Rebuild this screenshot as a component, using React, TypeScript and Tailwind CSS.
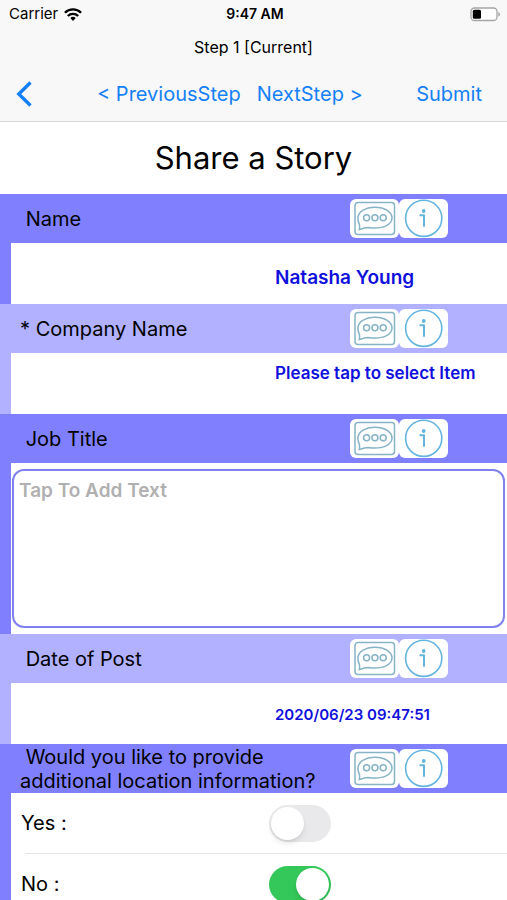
import React, { useState } from 'react'

const CommentIcon = () => (
  <svg viewBox="0 0 49 39" className="w-full h-full" fill="none" stroke="#86b3c6" strokeWidth="1.5">
    <rect x="5" y="3.500" width="39.500" height="32" rx="3" />
    <path d="M9.300 30.600c.4-2 .4-3.600.1-5.200C8.500 23.600 7.900 21.700 7.900 19.500 7.900 13.100 15.200 8.200 25 8.200S42 13.100 42 19.100 34.500 29 25 29c-2.600 0-4.900-.3-7-.6-2.500 0-5.300.9-8.700 2.200z" />
    <circle cx="16.600" cy="18.800" r="3" />
    <circle cx="24.900" cy="18.800" r="3" />
    <circle cx="33.200" cy="18.800" r="3" />
  </svg>
)

const InfoIcon = () => (
  <svg viewBox="0 0 49 39" className="w-full h-full" fill="none" stroke="#64b4e0" strokeWidth="1.600">
    <circle cx="24.700" cy="19.300" r="18.100" />
    <circle cx="24.700" cy="12" r="1.900" fill="#64b4e0" stroke="none" />
    <path d="M21.300 16.300h3.700v10.700" strokeWidth="2" strokeLinecap="round" strokeLinejoin="round" />
  </svg>
)

const WifiIcon = () => (
  <svg viewBox="0 0 18 13" className="w-[18px] h-[13px]" fill="none" stroke="#000" strokeWidth="2.300">
    <path d="M.9 4.800a11.500 11.500 0 0 1 16.200 0" />
    <path d="M3.800 8a7.400 7.400 0 0 1 10.400 0" />
    <path d="M9 13l-2.700-2.900a3.900 3.900 0 0 1 5.400 0z" fill="#000" stroke="none" />
  </svg>
)

const BatteryIcon = () => (
  <svg viewBox="0 0 31 15" className="w-[31px] h-[15px]">
    <rect x="1" y="1" width="26" height="12.500" rx="3.500" fill="#fff" stroke="#a6a6a6" strokeWidth="1.300" />
    <rect x="2.800" y="2.800" width="8.200" height="9" rx="1.500" fill="#000" />
    <path d="M28.300 5v4.600c1-.4 1.700-1.300 1.700-2.300s-.7-1.900-1.700-2.300z" fill="#a6a6a6" />
  </svg>
)

type SectionProps = {
  title: string
  htmlFor?: string
  required?: boolean
  light?: boolean
  children: React.ReactNode
}

const Section = ({ title, htmlFor, required, light, children }: SectionProps) => {
  const bg = light ? 'bg-[#b1b1ff]' : 'bg-[#8080ff]'
  return (
    <section className={bg}>
      <div className="flex items-center justify-between h-[49px] pl-5 pr-[59px]">
        <label htmlFor={htmlFor} className="text-xl leading-6 whitespace-pre-wrap max-w-[300px]">
          {required ? '* ' : ' '}{title}
        </label>
        <div className="flex shrink-0">
          <button aria-label="Comment" className="w-[49px] h-[39px] bg-white rounded-md"><CommentIcon /></button>
          <button aria-label="Info" className="w-[49px] h-[39px] bg-white rounded-md"><InfoIcon /></button>
        </div>
      </div>
      <div className="ml-[11px] bg-white min-h-[61px]">{children}</div>
    </section>
  )
}

type ToggleProps = { id: string; label: string; checked: boolean; onChange: () => void }

const Toggle = ({ id, label, checked, onChange }: ToggleProps) => (
  <div className="flex items-center h-[60px] pl-[10px]">
    <label htmlFor={id} className="text-xl w-[248px]">{label}</label>
    <input
      id={id}
      type="checkbox"
      role="switch"
      checked={checked}
      onChange={onChange}
      className="appearance-none flex items-center w-[62px] h-[37px] p-[2px] rounded-full bg-[#e9e9eb] checked:bg-[#34c759] checked:justify-end before:block before:w-[33px] before:h-[33px] before:rounded-full before:bg-white before:shadow-md"
    />
  </div>
)

const App = () => {
  const [location, setLocation] = useState(false)
  const [jobTitle, setJobTitle] = useState('')

  return (
    <div className="h-screen flex flex-col bg-white text-black font-['Inter',sans-serif]">
      <header className="shrink-0 bg-[#f8f8f8] border-b border-[#d8d8d8]">
        <div className="grid grid-cols-3 items-center h-7 pl-[9px] pr-[6px]">
          <div className="flex items-center gap-[6px] text-[15px]">Carrier <WifiIcon /></div>
          <p className="text-sm font-semibold text-center">9:47 AM</p>
          <div className="flex justify-end"><BatteryIcon /></div>
        </div>
        <p className="text-base leading-5 text-center pt-[9px]">Step 1 [Current]</p>
        <nav className="flex items-center h-16 pt-[10px] pl-4 pr-[25px] text-xl text-[#1480f8]">
          <button aria-label="Back" className="w-[81px]">
            <svg viewBox="0 0 16 26" className="w-4 h-[26px]" fill="none" stroke="currentColor" strokeWidth="3.400">
              <path d="M14.500 1.500L2.800 13l11.700 11.500" />
            </svg>
          </button>
          <button>&lt; PreviousStep</button>
          <button className="ml-4">NextStep &gt;</button>
          <button className="ml-auto">Submit</button>
        </nav>
      </header>

      <main className="flex-1 min-h-0 overflow-y-auto [scrollbar-width:none]">
        <h1 className="flex items-center justify-center h-[72px] text-[31px]">Share a Story</h1>

        <Section title="Name">
          <p className="pl-[264px] pt-[21px] text-[19px] leading-7 font-semibold text-[#1010dd]">Natasha Young</p>
        </Section>

        <Section title="Company Name" required light>
          <button className="block ml-[264px] pt-2 text-[17px] leading-6 font-semibold text-[#1010dd]">
            Please tap to select Item
          </button>
        </Section>

        <Section title="Job Title" htmlFor="job-title">
          <div className="pl-[1px] pr-[2px] py-[6px]">
            <textarea
              id="job-title"
              value={jobTitle}
              onChange={(e) => setJobTitle(e.target.value)}
              placeholder="Tap To Add Text"
              className="block w-full h-[159px] px-[5px] py-2 resize-none rounded-xl border-2 border-[#8080f0] text-[19px] leading-6 font-semibold placeholder:text-[#b0b0b0]"
            />
          </div>
        </Section>

        <Section title="Date of Post" light>
          <p className="pl-[264px] pt-[22px] text-[15px] leading-5 font-semibold text-[#1010dd]">2020/06/23 09:47:51</p>
        </Section>

        <Section title="Would you like to provide additional location information?">
          <Toggle id="location-yes" label="Yes :" checked={location} onChange={() => setLocation(true)} />
          <hr className="ml-[14px] border-[#e4e4e6]" />
          <Toggle id="location-no" label="No :" checked={!location} onChange={() => setLocation(false)} />
        </Section>
      </main>
    </div>
  )
}

export default App
